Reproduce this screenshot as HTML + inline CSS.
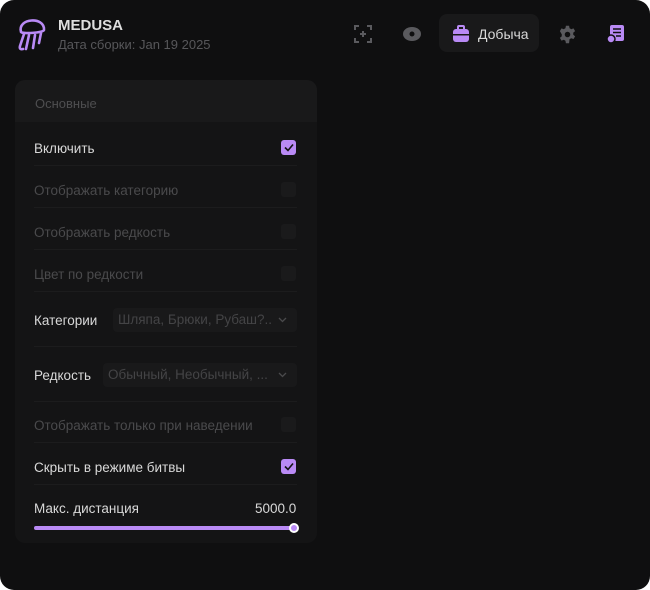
<!DOCTYPE html>
<html><head><meta charset="utf-8"><style>
html,body{margin:0;padding:0;background:#fff;}
body{width:650px;height:590px;overflow:hidden;font-family:"Liberation Sans","DejaVu Sans",sans-serif;}
.win{position:absolute;left:0;top:0;width:650px;height:590px;background:#0f0f10;border-radius:14px;overflow:hidden;}
.t{position:absolute;white-space:nowrap;}
.panel{position:absolute;left:15px;top:80px;width:302px;height:463px;background:#141415;border-radius:10px;overflow:hidden;}
.ph{position:absolute;left:0;top:0;width:302px;height:42px;background:#19191a;}
.sep{position:absolute;left:19px;width:263px;height:1px;background:#1c1c1d;}
.cb{position:absolute;left:266px;width:15px;height:15px;border-radius:3px;}
.on{background:#b98af5;}
.off{background:#1a1a1b;}
.lbl{font-size:13.5px;color:#d8d8d8;}
.dis{font-size:13.5px;color:#4a4a4c;}
.sel{position:absolute;height:24px;background:#19191a;border-radius:4px;font-size:13.5px;color:#444446;line-height:24px;padding-left:5px;box-sizing:border-box;}
.chev{position:absolute;right:10px;top:9px;}
</style></head><body><div class="win">
<svg style="position:absolute;left:16px;top:15px" width="32" height="37" viewBox="0 0 32 37" fill="none" stroke="#b98af5" stroke-width="2.6" stroke-linecap="round" stroke-linejoin="round"><path d="M5 17 C1 3 29 1 28 15 C27 18 6 19 5 17Z"/><path d="M8 19 L4 31 Q3 35 7 34"/><path d="M13 20 L10 34"/><path d="M19 20 L17 33"/><path d="M25 18 L23 28"/></svg>
<div class="t" style="left:58px;top:17px;font-size:15px;font-weight:bold;color:#dedede">MEDUSA</div>
<div class="t" style="left:58px;top:37px;font-size:13px;color:#57575a">Дата сборки: Jan 19 2025</div>
<svg style="position:absolute;left:354px;top:25px" width="18" height="18" viewBox="0 0 18 18" fill="none" stroke="#5a5a5e" stroke-width="2"><path d="M1 5V1H5M13 1H17V5M17 13V17H13M5 17H1V13M9 6V12M6 9H12"/></svg>
<svg style="position:absolute;left:403px;top:27px" width="18" height="14" viewBox="0 0 18 14"><ellipse cx="9" cy="7" rx="9" ry="7" fill="#5a5a5e"/><circle cx="9" cy="7" r="2.5" fill="#0f0f10"/></svg>
<div style="position:absolute;left:439px;top:14px;width:100px;height:38px;background:#19191a;border-radius:8px"></div>
<svg style="position:absolute;left:452px;top:25px" width="18" height="18" viewBox="0 0 18 18"><rect x="6" y="1" width="6" height="4" rx="1" fill="none" stroke="#b98af5" stroke-width="2"/><rect x="1" y="4" width="16" height="13" rx="3" fill="#b98af5"/><rect x="1" y="9" width="16" height="1.5" fill="#19191a"/></svg>
<div class="t" style="left:478px;top:26px;font-size:14px;color:#d8d8d8">Добыча</div>
<svg style="position:absolute;left:558px;top:25px" width="19" height="19" viewBox="0 0 24 24"><path fill="#5a5a5e" fill-rule="evenodd" d="M10 1h4l.6 3.1a8 8 0 0 1 2 1.2l3-1 2 3.4-2.4 2.1a8 8 0 0 1 0 2.4l2.4 2.1-2 3.4-3-1a8 8 0 0 1-2 1.2L14 23h-4l-.6-3.1a8 8 0 0 1-2-1.2l-3 1-2-3.4 2.4-2.1a8 8 0 0 1 0-2.4L2.4 7.7l2-3.4 3 1a8 8 0 0 1 2-1.2zM12 8.5a3.5 3.5 0 1 0 0 7 3.5 3.5 0 0 0 0-7z"/></svg>
<svg style="position:absolute;left:606px;top:24px" width="20" height="20" viewBox="0 0 20 20"><rect x="4" y="1" width="14" height="16" rx="2" fill="#b98af5"/><path d="M7 5H15M7 8.5H15M10 12H15" stroke="#0f0f10" stroke-width="1.6"/><circle cx="5" cy="15" r="4" fill="#b98af5" stroke="#0f0f10" stroke-width="1.5"/></svg>
<div class="panel"><div class="ph"></div>
<div class="t" style="left:20px;top:16px;font-size:13px;color:#4e4e50">Основные</div>
<div class="t lbl" style="left:19px;top:61px">Включить</div><div class="cb on" style="top:60px"></div>
<svg style="position:absolute;left:269px;top:63px" width="10" height="9" viewBox="0 0 10 9" fill="none" stroke="#141415" stroke-width="1.6"><path d="M1 4.5L4 7.5L9 1.5"/></svg>
<div class="sep" style="top:85px"></div>
<div class="t dis" style="left:19px;top:103px">Отображать категорию</div><div class="cb off" style="top:102px"></div>
<div class="sep" style="top:127px"></div>
<div class="t dis" style="left:19px;top:145px">Отображать редкость</div><div class="cb off" style="top:144px"></div>
<div class="sep" style="top:169px"></div>
<div class="t dis" style="left:19px;top:187px">Цвет по редкости</div><div class="cb off" style="top:186px"></div>
<div class="sep" style="top:211px"></div>
<div class="t lbl" style="left:19px;top:233px">Категории</div>
<div class="sel" style="left:98px;top:228px;width:184px">Шляпа, Брюки, Рубаш?..<svg class="chev" width="9" height="6" viewBox="0 0 9 6" fill="none" stroke="#4a4a4c" stroke-width="1.3"><path d="M1 1L4.5 4.5L8 1"/></svg></div>
<div class="sep" style="top:266px"></div>
<div class="t lbl" style="left:19px;top:288px">Редкость</div>
<div class="sel" style="left:88px;top:283px;width:194px">Обычный, Необычный, ...<svg class="chev" width="9" height="6" viewBox="0 0 9 6" fill="none" stroke="#4a4a4c" stroke-width="1.3"><path d="M1 1L4.5 4.5L8 1"/></svg></div>
<div class="sep" style="top:321px"></div>
<div class="t dis" style="left:19px;top:338px">Отображать только при наведении</div><div class="cb off" style="top:337px"></div>
<div class="sep" style="top:362px"></div>
<div class="t lbl" style="left:19px;top:380px">Скрыть в режиме битвы</div><div class="cb on" style="top:379px"></div>
<svg style="position:absolute;left:269px;top:382px" width="10" height="9" viewBox="0 0 10 9" fill="none" stroke="#141415" stroke-width="1.6"><path d="M1 4.5L4 7.5L9 1.5"/></svg>
<div class="sep" style="top:404px"></div>
<div class="t lbl" style="left:19px;top:421px">Макс. дистанция</div>
<div class="t lbl" style="left:240px;top:421px">5000.0</div>
<div style="position:absolute;left:19px;top:446px;width:260px;height:4px;background:#b98af5;border-radius:2px"></div>
<div style="position:absolute;left:274px;top:443px;width:6px;height:6px;background:#b98af5;border:2px solid #fff;border-radius:50%"></div>
</div>
</div></body></html>
